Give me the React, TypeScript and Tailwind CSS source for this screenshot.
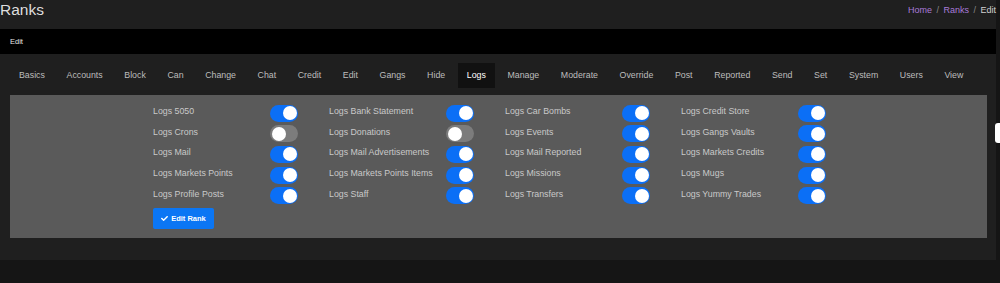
import { FaCheck } from "react-icons/fa";

type Perm = { label: string; on: boolean };

const tabs = [
	"Basics",
	"Accounts",
	"Block",
	"Can",
	"Change",
	"Chat",
	"Credit",
	"Edit",
	"Gangs",
	"Hide",
	"Logs",
	"Manage",
	"Moderate",
	"Override",
	"Post",
	"Reported",
	"Send",
	"Set",
	"System",
	"Users",
	"View",
];

// laid out row by row, four per row
const perms: Perm[] = [
	{ label: "Logs 5050", on: true },
	{ label: "Logs Bank Statement", on: true },
	{ label: "Logs Car Bombs", on: true },
	{ label: "Logs Credit Store", on: true },
	{ label: "Logs Crons", on: false },
	{ label: "Logs Donations", on: false },
	{ label: "Logs Events", on: true },
	{ label: "Logs Gangs Vaults", on: true },
	{ label: "Logs Mail", on: true },
	{ label: "Logs Mail Advertisements", on: true },
	{ label: "Logs Mail Reported", on: true },
	{ label: "Logs Markets Credits", on: true },
	{ label: "Logs Markets Points", on: true },
	{ label: "Logs Markets Points Items", on: true },
	{ label: "Logs Missions", on: true },
	{ label: "Logs Mugs", on: true },
	{ label: "Logs Profile Posts", on: true },
	{ label: "Logs Staff", on: true },
	{ label: "Logs Transfers", on: true },
	{ label: "Logs Yummy Trades", on: true },
];

const Toggle = ({ on }: { on: boolean }) => (
	<div
		className={`flex h-[17px] w-[28px] items-center rounded-full px-[1.5px] ${
			on ? "justify-end bg-[#0b6ff6]" : "justify-start bg-[#7c7c7c]"
		}`}
	>
		<div className="h-[14px] w-[14px] rounded-full bg-white" />
	</div>
);

const App = () => {
	return (
		<div className="relative h-[283px] w-[1000px] overflow-hidden bg-[#151515] font-['Liberation_Sans',Arial,sans-serif]">
			<div className="w-[996px] bg-[#1f1f1f] pb-[22px]">
				<div className="flex h-[29px] items-center justify-between">
					<h1 className="-mt-[9px] text-[15.5px] leading-none text-[#dedede]">
						Ranks
					</h1>
					<div className="-mt-[9px] flex items-center text-[9px] leading-none">
						<span className="text-[#a97bd9]">Home</span>
						<span className="px-[4.5px] text-[#888]">/</span>
						<span className="text-[#a97bd9]">Ranks</span>
						<span className="px-[4.5px] text-[#888]">/</span>
						<span className="text-[#cfcfcf]">Edit</span>
					</div>
				</div>

				<div className="flex h-[25px] items-center bg-black px-[10px] text-[7.5px] text-[#e8e8e8]">
					Edit
				</div>

				<div className="mt-[9px] flex h-[25px] gap-[3.6px] pl-[10px]">
					{tabs.map((t) => (
						<div
							key={t}
							className={`flex items-center px-[9px] text-[8.8px] ${
								t === "Logs" ? "bg-[#111111] text-white" : "text-[#bdbdbd]"
							}`}
						>
							{t}
						</div>
					))}
				</div>

				<div className="mx-[10px] mt-[7px] w-[977px] bg-[#5a5a5a] pb-[9px] pl-[143px] pt-[8px]">
					<div className="grid grid-cols-[repeat(4,176px)]">
						{perms.map((p) => (
							<div key={p.label} className="flex h-[20.6px] items-center">
								<p className="-mt-[3px] w-[117px] text-[8.8px] text-[#c9c9c9]">
									{p.label}
								</p>
								<Toggle on={p.on} />
							</div>
						))}
					</div>

					<button
						type="button"
						className="mt-[2px] flex h-[21px] w-[61px] items-center justify-center gap-[3px] rounded-[2px] bg-[#0b76f4] text-[7.5px] font-bold text-white"
					>
						<FaCheck className="h-[7px] w-[7px]" />
						Edit Rank
					</button>
				</div>
			</div>

			<div className="absolute right-0 top-[123px] h-[20px] w-[5px] rounded-l-[3px] bg-white" />
		</div>
	);
};

export default App;
